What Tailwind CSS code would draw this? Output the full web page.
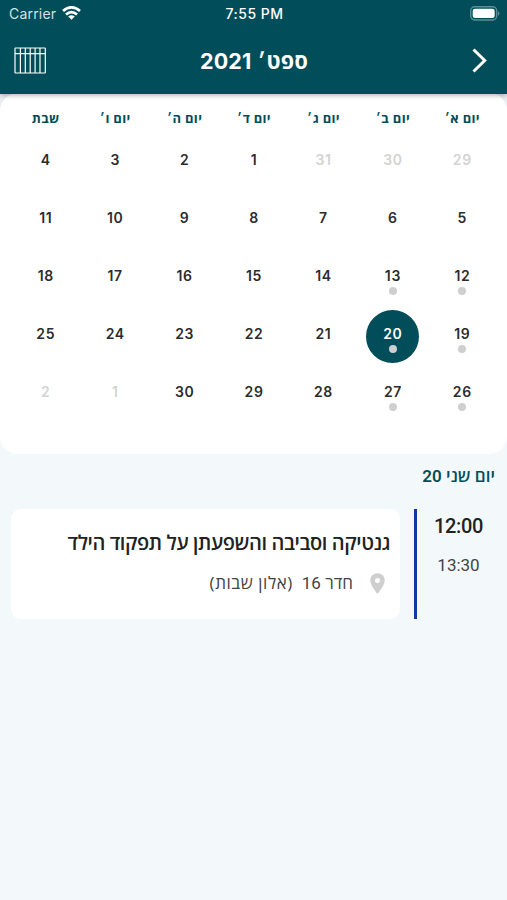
<!DOCTYPE html>
<html lang="he">
<head>
<meta charset="utf-8">
<title>יומן</title>
<script src="https://cdn.jsdelivr.net/npm/@tailwindcss/browser@4"></script>
</head>
<body class="bg-[#f3f8fb] w-[507px] h-[900px] overflow-hidden font-['Inter','Open_Sans',sans-serif] text-[#2c2c2c]">
<div class="bg-[#014d59] h-[94px] relative z-10 shadow-[0_1px_5px_rgba(0,0,0,0.35)] text-white">
  <div class="h-7 grid grid-cols-3 items-center pl-[9px] pr-[7px]">
    <div class="flex items-center gap-[5px] text-[14px] text-[#d3e1e3] -mt-0.5"><span class="w-[48px] whitespace-nowrap tracking-[0.2px]">Carrier</span>
      <svg class="w-[19px] h-[14px]" viewBox="0 0 19 14"><g fill="none" stroke="#fff" stroke-width="2.700"><path d="M1 5.100Q9.500-2.300 18 5.100"/><path d="M4 8.500Q9.500 3.700 15 8.500"/></g><path fill="#fff" d="M6.200 10.600Q9.500 7.800 12.800 10.600L9.500 13.800Z"/></svg>
    </div>
    <div class="text-center text-[14px] font-medium tracking-[0.500px] -mt-px">7:55 PM</div>
    <svg class="w-[31px] h-[15px] justify-self-end -mt-0.5" viewBox="0 0 31 15"><rect x="1.700" y=".7" width="26" height="13.300" rx="4" fill="none" stroke="#5f8d95" stroke-width="1.400"/><rect x="3.700" y="2.700" width="22" height="9.300" rx="2.300" fill="#fff"/><path d="M29 5v5q3-2.500 0-5" fill="#5f8d95"/></svg>
  </div>
  <div class="h-[66px] flex items-center justify-between pl-[14px] pr-[17px]">
    <svg class="w-8 h-[28px] -mt-0.5" viewBox="0 0 32 28" fill="none" stroke="#fff" stroke-width="1.200"><rect x="1" y="2" width="30.300" height="25" rx=".5"/><path d="M1 7.700h30.300M6.400 2v25M11.300 2v25M16.200 2v25M21.100 2v25M26 2v25"/></svg>
    <h1 dir="rtl" class="text-[21.500px] font-bold leading-[28px] flex gap-[6px] mr-[8px] mt-[1px]"><span class="font-['Open_Sans'] tracking-[0.300px]">ספט<span class="font-['Liberation_Sans']">׳</span></span><span class="tracking-[0.200px]">2021</span></h1>
    <svg class="w-5 h-7 -mt-[3px]" viewBox="0 0 20 28" fill="none" stroke="#fff" stroke-width="3"><path d="M3.500 3.500L14.700 14.500L3.500 25.500"/></svg>
  </div>
</div>
<main dir="rtl">
  <div class="bg-[#e9eef1] h-[20px] -mb-[21px]"></div>
  <section class="relative bg-white h-[361px] rounded-[18px] pl-[11px] pr-[10px] pt-[16px]">
    <div class="grid grid-cols-7 text-center text-[#014d59] font-['Open_Sans'] text-[13px] font-bold leading-[18px] tracking-[0.300px]">
      <span>יום א<b class="font-['Liberation_Sans']">׳</b></span><span>יום ב<b class="font-['Liberation_Sans']">׳</b></span><span>יום ג<b class="font-['Liberation_Sans']">׳</b></span><span>יום ד<b class="font-['Liberation_Sans']">׳</b></span><span>יום ה<b class="font-['Liberation_Sans']">׳</b></span><span>יום ו<b class="font-['Liberation_Sans']">׳</b></span><span>שבת</span>
    </div>
    <div id="days" class="grid grid-cols-7 mt-[8px] auto-rows-[58px] text-[14px] font-semibold tracking-[0.600px]"></div>
  </section>
  <h2 class="h-[43px] leading-[43px] pr-[12px] text-[17px] font-semibold text-[#014d59] whitespace-nowrap"><span class="font-['Open_Sans']">יום שני</span> <span class="font-['Roboto']">20</span></h2>
  <section class="flex mt-[12px] h-[110px] pl-[11px]">
    <div class="w-[90px] pl-[1px] pr-[8px] pt-[3px] flex flex-col items-center font-['Roboto']">
      <span class="text-[20px] leading-[28px] font-medium text-[#222] tracking-[-0.300px]">12:00</span>
      <span class="text-[17px] leading-[24px] mt-[13px] text-[#444]">13:30</span>
    </div>
    <div class="w-[3px] bg-[#1138a5]"></div>
    <article class="mr-[14px] w-[389px] bg-white rounded-[10px] pr-[10px] pt-[19px] font-['Open_Sans']">
      <h3 class="text-[20px] leading-[30px] font-semibold text-[#222] whitespace-nowrap tracking-[-0.400px]">גנטיקה וסביבה והשפעתן על תפקוד הילד</h3>
      <div class="flex items-center mt-[13px] h-[24px] pr-[5px] text-[17px] text-[#444]">
        <svg class="w-[15px] h-[21px]" viewBox="0 0 15 21"><path fill="#cfcfcf" fill-rule="evenodd" d="M7.500.3C3.300.3.300 3.300.300 7.400C.3 12.500 7.500 20.700 7.500 20.700S14.700 12.500 14.700 7.400C14.700 3.300 11.700.3 7.500.3ZM7.500 5a2.500 2.500 0 1 1 0 5a2.500 2.500 0 1 1 0-5Z"/></svg>
        <span class="mr-[17px] whitespace-pre">חדר <span class="font-['Roboto']">16</span>  <span class="tracking-[0.550px]">(אלון שבות)</span></span>
      </div>
    </article>
  </section>
</main>
<script>
const days=[29,30,31,...Array.from({length:30},(_,i)=>i+1),1,2];
const events=new Set([12,13,19,20,26,27]);
document.getElementById('days').innerHTML=days.map((d,i)=>{
  const out=i<3||i>32, sel=!out&&d===20, ev=!out&&events.has(d);
  return `<div class="flex justify-center"><div class="w-[53px] h-[53px] rounded-full flex flex-col items-center pt-[14px] ${sel?'bg-[#014d59] text-white':out?'text-[#d3d3d3]':''}"><span class="leading-[20px]">${d}</span>${ev?'<i class="w-2 h-2 rounded-full bg-[#cfcfcf] block mt-px"></i>':''}</div></div>`;
}).join('');
</script>
</body>
</html>
